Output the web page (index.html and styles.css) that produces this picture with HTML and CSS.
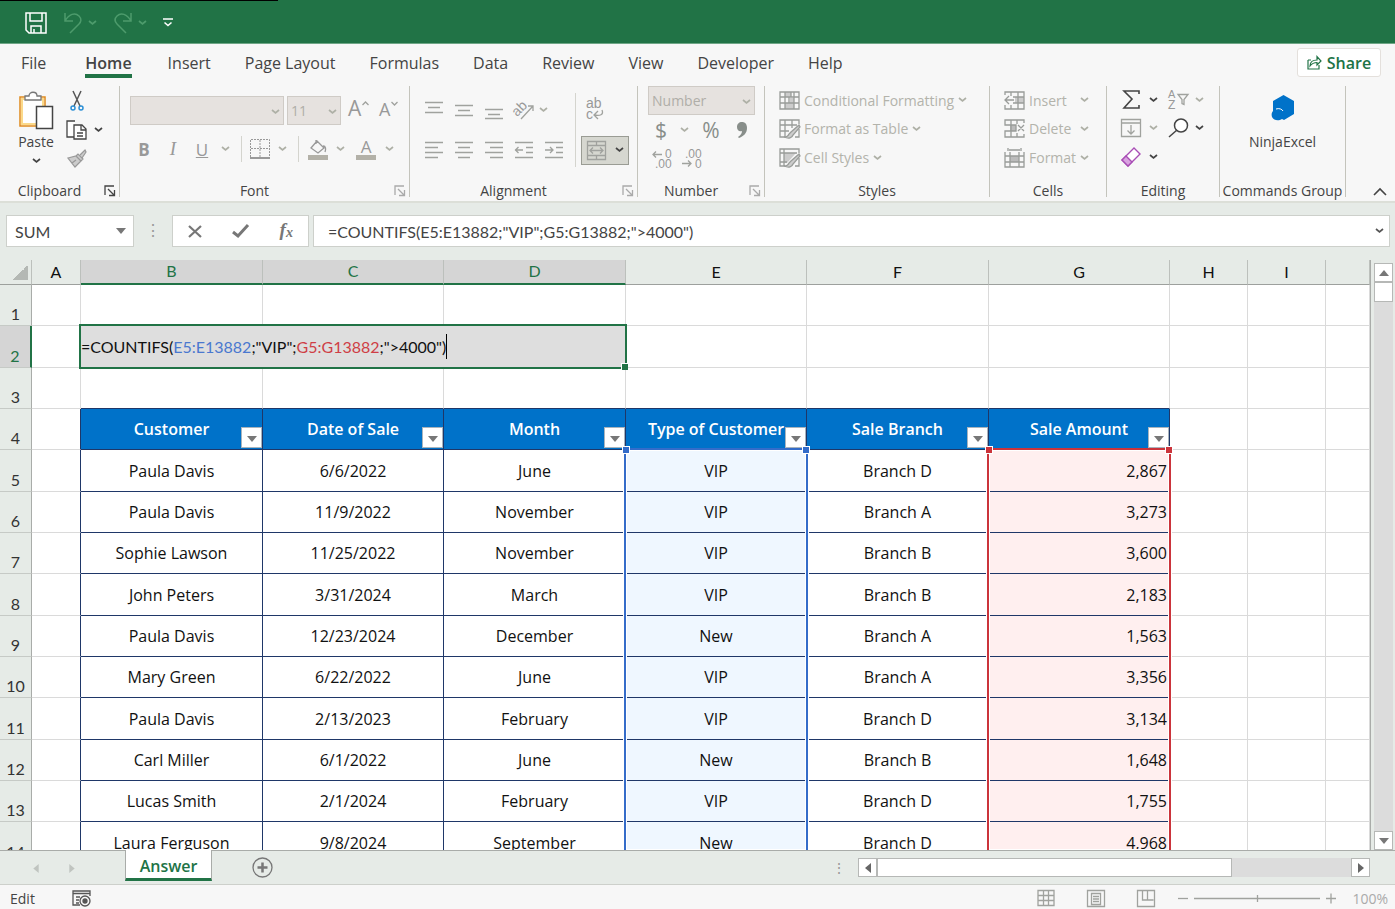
FILE: index.html
```
<!DOCTYPE html>
<html lang="en">
  <head>
    <meta charset="UTF-8" />
    <meta name="viewport" content="width=device-width, initial-scale=1.0" />
    <title>Sales - Excel</title>
    <link rel="stylesheet" href="styles.css">
  </head>
  <body>
    <!-- shared icons -->
    <svg class="sprite" aria-hidden="true">
      <symbol id="chev" viewBox="0 0 9 6"><path d="M1 1l3.5 3L8 1" fill="none" stroke="currentColor" stroke-width="1.7" /></symbol>
      <symbol id="launch" viewBox="0 0 12 12"><path d="M1 10V1h9M4 4l6 6M10.500 5v5.500H5" fill="none" stroke="currentColor" stroke-width="1.300" /></symbol>
      <symbol id="down" viewBox="0 0 10 6"><path d="M0 0h10L5 6z" fill="currentColor" /></symbol>
      <symbol id="left" viewBox="0 0 6 10"><path d="M6 0v10L0 5z" fill="currentColor" /></symbol>
      <symbol id="right" viewBox="0 0 6 10"><path d="M0 0v10l6-5z" fill="currentColor" /></symbol>
    </svg>

    <header class="titlebar">
      <button type="button" class="qat save" aria-label="Save">
        <svg width="22" height="22" viewBox="0 0 22 22" fill="none" stroke="#fff" stroke-width="1.500"><path d="M1 1h20v20H4l-3-3zM5 1v8h12V1M6 21v-7h10v7M9 21v-4" /></svg>
      </button>
      <button type="button" class="qat" aria-label="Undo">
        <svg width="20" height="22" viewBox="0 0 20 22" fill="none" stroke="#4d9b6c" stroke-width="1.500"><path d="M2 1v8h8M2 9C6 2 12 0 16 4c3 3 2 6 0 8l-9 9" /></svg>
        <svg class="chev dim-green"><use href="#chev" /></svg>
      </button>
      <button type="button" class="qat" aria-label="Redo">
        <svg width="20" height="22" viewBox="0 0 20 22" fill="none" stroke="#4d9b6c" stroke-width="1.500"><path d="M18 1v8h-8M18 9C14 2 8 0 4 4c-3 3-2 6 0 8l9 9" /></svg>
        <svg class="chev dim-green"><use href="#chev" /></svg>
      </button>
      <button type="button" class="qat" aria-label="Customize toolbar">
        <svg width="10" height="10" viewBox="0 0 10 10" fill="none" stroke="#fff" stroke-width="1.600"><path d="M0 1h10M1.500 4.500L5 7.500l3.500-3" /></svg>
      </button>
    </header>

    <nav class="tabs">
      <a href="#">File</a>
      <a href="#" class="active">Home</a>
      <a href="#">Insert</a>
      <a href="#">Page Layout</a>
      <a href="#">Formulas</a>
      <a href="#">Data</a>
      <a href="#">Review</a>
      <a href="#">View</a>
      <a href="#">Developer</a>
      <a href="#">Help</a>
      <button type="button" class="share">
        <svg width="15" height="15" viewBox="0 0 15 15" fill="none" stroke="#217346" stroke-width="1.200"><path d="M1 5v9h11v-4M3 11c0-4 3-6 7-6V1.500l4 4.500-4 4V7.500c-3 0-5 1-7 3.500zM1 5h3" /></svg>
        Share
      </button>
    </nav>

    <section class="ribbon">
      <div class="group clipboard">
        <div class="tools">
          <button type="button" class="big">
            <svg width="36" height="40" viewBox="0 0 36 40" fill="#fff"><path d="M2 6h25v29H2z" stroke="#e08a1e" stroke-width="1.500" /><path d="M4 8h21v25H4z" stroke="#fbd98a" stroke-width="2" /><path d="M7 9V5h4c0-5 8-5 8 0h4v4z" stroke="#777" stroke-width="1.300" /><path d="M18.500 15.500h16v22h-16z" stroke="#444" stroke-width="1.500" /></svg>
            <span>Paste</span>
            <svg class="chev"><use href="#chev" /></svg>
          </button>
          <div class="side">
            <button type="button" aria-label="Cut"><svg width="14" height="20" viewBox="0 0 14 20" fill="none" stroke="#555" stroke-width="1.500"><path d="M3 0l7 15M11 0L4 15" /><g stroke="#2b8fd6"><circle cx="3" cy="17" r="2" /><circle cx="11" cy="17" r="2" /></g></svg></button>
            <button type="button" class="copy" aria-label="Copy"><svg width="22" height="20" viewBox="0 0 22 20" fill="#fff" stroke="#444" stroke-width="1.300"><path d="M8 17H1V1h8" /><path d="M8 5h8l4 4v10H8zM15 5v5h5M11 13h6M11 16h6" /></svg><svg class="chev"><use href="#chev" /></svg></button>
            <button type="button" aria-label="Format Painter"><svg width="20" height="19" viewBox="0 0 20 19" fill="#ccc" stroke="#999" stroke-width="1.200"><path d="M1 9l8-2 5 5-6 6zM9 7l2-2 5 5-2 2zM13 6l5-5 1 2-4 6M5 14l4-3" /></svg></button>
          </div>
        </div>
        <div class="caption">Clipboard<svg class="launch dark"><use href="#launch" /></svg></div>
      </div>

      <div class="group font">
        <div class="tools">
          <div class="row">
            <label class="combo family"><select disabled aria-label="Font"><option></option></select><svg class="chev"><use href="#chev" /></svg></label>
            <label class="combo size"><select disabled aria-label="Font size"><option>11</option></select><svg class="chev"><use href="#chev" /></svg></label>
            <button type="button" class="grow" aria-label="Increase font size" disabled>A<svg width="7" height="5" viewBox="0 0 7 5"><path d="M.5 4l3-3 3 3" class="line" /></svg></button>
            <button type="button" class="grow shrink" aria-label="Decrease font size" disabled>A<svg width="7" height="5" viewBox="0 0 7 5"><path d="M.5 1l3 3 3-3" class="line" /></svg></button>
          </div>
          <div class="font-grid">
            <button type="button" class="bold" disabled>B</button>
            <button type="button" class="italic" disabled>I</button>
            <button type="button" class="under" disabled>U</button>
            <svg class="chev"><use href="#chev" /></svg>
            <span class="sep"></span>
            <svg width="20" height="20" viewBox="0 0 20 20" fill="none" stroke="#999"><path d="M.5 18V.5h19V18M10 1v17M1 9.500h18" stroke-dasharray="2 1" /><path d="M0 19h20" stroke-width="2" /></svg>
            <svg class="chev"><use href="#chev" /></svg>
            <span class="sep"></span>
            <svg width="20" height="21" viewBox="0 0 20 21" fill="none" stroke="#999" stroke-width="1.300"><path d="M9 2l7 7-6 5-7-5zM8 5V1M15 7c3 0 3 3 2 6" /><path d="M0 18.500h20" stroke="#b3b1a8" stroke-width="5" /></svg>
            <svg class="chev"><use href="#chev" /></svg>
            <button type="button" class="color" disabled>A</button>
            <svg class="chev"><use href="#chev" /></svg>
          </div>
        </div>
        <div class="caption">Font<svg class="launch"><use href="#launch" /></svg></div>
      </div>

      <div class="group alignment">
        <div class="align-grid">
          <svg width="18" height="18" viewBox="0 0 18 18"><path d="M0 1.500h18M3 6.500h12M0 11.500h18" class="line" /></svg>
          <svg width="18" height="18" viewBox="0 0 18 18"><path d="M0 4.500h18M3 9.500h12M0 14.500h18" class="line" /></svg>
          <svg width="18" height="18" viewBox="0 0 18 18"><path d="M0 8.500h18M3 13.500h12M0 17.500h18" class="line" /></svg>
          <svg width="22" height="22" viewBox="0 0 22 22"><text x="0" y="15" font-size="14" transform="rotate(-45 6 12)">ab</text><path d="M8 20L20 7M15 7h5v5" class="line" /></svg>
          <svg class="chev start"><use href="#chev" /></svg>
          <span class="sep tall"></span>
          <svg class="start wrap" width="20" height="22" viewBox="0 0 20 22"><text x="1" y="9" font-size="14">ab</text><text x="1" y="20" font-size="14">c</text><path d="M17 11c2 5-2 6-8 5M13 12l-4 4 4 4" class="line" /></svg>
          <svg width="18" height="18" viewBox="0 0 18 18"><path d="M0 1.500h18M0 6.500h13M0 11.500h18M0 16.500h13" class="line" /></svg>
          <svg width="18" height="18" viewBox="0 0 18 18"><path d="M0 1.500h18M3 6.500h12M0 11.500h18M3 16.500h12" class="line" /></svg>
          <svg width="18" height="18" viewBox="0 0 18 18"><path d="M0 1.500h18M5 6.500h13M0 11.500h18M5 16.500h13" class="line" /></svg>
          <svg width="18" height="18" viewBox="0 0 18 18"><path d="M0 1.500h18M11 6.500h7M11 11.500h7M0 16.500h18M0 9h8M3.500 6L.5 9l3 3" class="line" /></svg>
          <svg width="18" height="18" viewBox="0 0 18 18"><path d="M0 1.500h18M11 6.500h7M11 11.500h7M0 16.500h18M0 9h8M5 6l3 3-3 3" class="line" /></svg>
          <button type="button" class="merge" aria-label="Merge and center">
            <svg width="19" height="19" viewBox="0 0 19 19"><path d="M.5 .5h18v18H.5zM.5 4.500h18M.5 14.500h18M9.500 0v4M9.500 15v4M3 9.500h13M6 6.500l-3 3 3 3M13 6.500l3 3-3 3" class="line" /></svg>
            <svg class="chev"><use href="#chev" /></svg>
          </button>
        </div>
        <div class="caption">Alignment<svg class="launch"><use href="#launch" /></svg></div>
      </div>

      <div class="group number">
        <div class="tools">
          <label class="combo format"><select disabled aria-label="Number format"><option>Number</option></select><svg class="chev"><use href="#chev" /></svg></label>
          <div class="number-grid">
            <button type="button" disabled>$</button>
            <svg class="chev"><use href="#chev" /></svg>
            <button type="button" disabled>%</button>
            <svg width="10" height="16" viewBox="0 0 10 16"><path d="M1 15c3-2 4-4 4-6-3 1-5-1-5-4 0-3 2-5 5-5s5 2 5 6c0 5-3 8-8 10z" fill="#888e8a" /></svg>
          </div>
          <div class="decimal">
            <svg width="20" height="20" viewBox="0 0 20 20"><text x="13" y="9" font-size="12">0</text><text x="3" y="19" font-size="12">.00</text><path d="M10 5.500H1M4 2.500l-3 3 3 3" class="line" /></svg>
            <svg width="20" height="20" viewBox="0 0 20 20"><text x="3" y="9" font-size="12">.00</text><text x="13" y="19" font-size="12">0</text><path d="M0 14.500h9M6 11.500l3 3-3 3" class="line" /></svg>
          </div>
        </div>
        <div class="caption">Number<svg class="launch"><use href="#launch" /></svg></div>
      </div>

      <div class="group styles">
        <div class="list">
          <button type="button" disabled><svg width="21" height="19" viewBox="0 0 21 19"><path d="M6 1h6v5H6zM6 12h9v6H6zM11 7h4v5h-4z" fill="#ccc" /><path d="M1 1h19v17H1zM6 1v17M12 1v5M15 1v17M1 6h19M1 12h19M10 6v6" class="grid" /></svg>Conditional Formatting<svg class="chev"><use href="#chev" /></svg></button>
          <button type="button" disabled><svg width="21" height="19" viewBox="0 0 21 19"><path d="M20 5V1H1v17h5M6 1v17M13 1v8M1 6h17M1 12h9M20 10v8h-4" class="grid" /><path d="M20 6l-8 7-2 2c-1 3-3 3-5 3 5 2 8 1 9-2l7-8z" class="brush" /></svg>Format as Table<svg class="chev"><use href="#chev" /></svg></button>
          <button type="button" disabled><svg width="21" height="19" viewBox="0 0 21 19"><path d="M5 5h12L8 15H5z" fill="#ccc" /><path d="M20 5V1H1v17h5M5 1v17M1 5h17M20 10v8h-4M1 14h7" class="grid" /><path d="M20 6l-8 7-2 2c-1 3-3 3-5 3 5 2 8 1 9-2l7-8z" class="brush" /></svg>Cell Styles<svg class="chev"><use href="#chev" /></svg></button>
        </div>
        <div class="caption">Styles</div>
      </div>

      <div class="group cells">
        <div class="list">
          <button type="button" disabled><svg width="21" height="19" viewBox="0 0 21 19"><path d="M11 6h9v6h-9z" fill="#ccc" /><path d="M1 4V1h19v17H1v-4M7 1v4M14 1v17M7 14v4M9 6h11M9 12h11M1 9h9M5 5L1 9l4 4" class="grid" /></svg><span>Insert</span><svg class="chev"><use href="#chev" /></svg></button>
          <button type="button" disabled><svg width="21" height="19" viewBox="0 0 21 19"><path d="M6 6h6v6H6z" fill="#bbb" /><path d="M20 4V1H1v5h11v6H1v6h19v-3M7 1v17M13 1v4M13 14v4M14 6l6 6M20 6l-6 6" class="grid" /></svg><span>Delete</span><svg class="chev"><use href="#chev" /></svg></button>
          <button type="button" disabled><svg width="21" height="20" viewBox="0 0 21 20"><path d="M6 8h9v6H6z" fill="#bbb" /><path d="M1 4v15h19V4M1 8h19M1 14h19M6 4v15M15 4v15M4 0v3M17 0v3M5 2h11" class="grid" /></svg><span>Format</span><svg class="chev"><use href="#chev" /></svg></button>
        </div>
        <div class="caption">Cells</div>
      </div>

      <div class="group editing">
        <div class="edit-grid">
          <svg width="17" height="19" viewBox="0 0 17 19"><path d="M16 4V1H1l8 8-8 9h15v-3" fill="none" stroke="#444" stroke-width="1.600" /></svg>
          <svg class="chev dark"><use href="#chev" /></svg>
          <svg width="21" height="21" viewBox="0 0 21 21"><text x="0" y="9" font-size="11">A</text><text x="0" y="20" font-size="12">Z</text><path d="M10 5.500h10l-4 5v5l-2-1v-4z" class="line" /></svg>
          <svg class="chev"><use href="#chev" /></svg>
          <svg width="20" height="18" viewBox="0 0 20 18"><path d="M.5 .5h19v17H.5zM.5 4h19M10 6v9M6.500 11.500L10 15l3.500-3.500" class="line" /></svg>
          <svg class="chev"><use href="#chev" /></svg>
          <svg width="21" height="20" viewBox="0 0 21 20" fill="#fff" stroke="#444" stroke-width="1.500"><circle cx="13" cy="7.500" r="6.500" /><path d="M9 12l-8 7" /></svg>
          <svg class="chev dark"><use href="#chev" /></svg>
          <svg width="20" height="20" viewBox="0 0 20 20" fill="#fff" stroke="#a84db5" stroke-width="1.400"><path d="M1 13L13 1l6 6L7 19z" /><path d="M1 13l4-4 6 6-4 4z" fill="#d9a3e0" /></svg>
          <svg class="chev dark"><use href="#chev" /></svg>
        </div>
        <div class="caption">Editing</div>
      </div>

      <div class="group ninja">
        <button type="button" class="big">
          <svg width="24" height="26" viewBox="0 0 24 26"><path d="M12.500 0L23 6v13l-10 6-2-1c-3 2-8 2-10-2-1-3 0-5 1-6V6z" fill="#0072c9" /><path d="M5 14c3-1 6 0 7 2" fill="none" stroke="#fff" /></svg>
          <span>NinjaExcel</span>
        </button>
        <div class="caption">Commands Group</div>
      </div>

      <button type="button" class="collapse" aria-label="Collapse ribbon"><svg width="14" height="8" viewBox="0 0 14 8" fill="none" stroke="#444" stroke-width="1.600"><path d="M1 7l6-6 6 6" /></svg></button>
    </section>

    <section class="formula-bar">
      <div class="name-box"><input type="text" value="SUM" aria-label="Name box"><svg class="arrow"><use href="#down" /></svg></div>
      <span class="dots">⋮</span>
      <div class="formula-buttons">
        <button type="button" aria-label="Cancel"><svg width="14" height="13" viewBox="0 0 14 13" fill="none" stroke="#777" stroke-width="2.200"><path d="M1 1l12 11M13 1L1 12" /></svg></button>
        <button type="button" aria-label="Enter"><svg width="17" height="14" viewBox="0 0 17 14" fill="none" stroke="#777" stroke-width="3"><path d="M1 8l5 4L16 1" /></svg></button>
        <button type="button" class="fx" aria-label="Insert function">f<sub>x</sub></button>
      </div>
      <div class="formula"><input type="text" value='=COUNTIFS(E5:E13882;"VIP";G5:G13882;"&gt;4000")' aria-label="Formula"><svg class="chev"><use href="#chev" /></svg></div>
    </section>

    <main class="workspace">
      <div class="sheet">
        <table>
          <colgroup>
            <col class="c-head"><col class="c-a"><col class="c-wide"><col class="c-data"><col class="c-wide"><col class="c-data"><col class="c-wide"><col class="c-data"><col class="c-h"><col class="c-h"><col>
          </colgroup>
          <thead>
            <tr><th class="corner"></th><th>A</th><th class="on">B</th><th class="on">C</th><th class="on">D</th><th>E</th><th>F</th><th>G</th><th>H</th><th>I</th><th></th></tr>
          </thead>
          <tbody>
            <tr><th>1</th><td></td><td></td><td></td><td></td><td></td><td></td><td></td><td></td><td></td><td></td></tr>
            <tr><th class="on">2</th><td></td><td colspan="3" class="editing-cell"><div class="cursor-box"></div><span class="entry">=COUNTIFS(<span class="ref-blue">E5:E13882</span>;"VIP";<span class="ref-red">G5:G13882</span>;"&gt;4000")</span></td><td></td><td></td><td></td><td></td><td></td><td></td></tr>
            <tr class="before-table"><th>3</th><td></td><td></td><td></td><td></td><td></td><td></td><td></td><td></td><td></td><td></td></tr>
            <tr class="head"><th>4</th><td class="edge"></td>
              <td class="h">Customer<button type="button" aria-label="Filter"><svg class="arrow"><use href="#down" /></svg></button></td>
              <td class="h">Date of Sale<button type="button" aria-label="Filter"><svg class="arrow"><use href="#down" /></svg></button></td>
              <td class="h">Month<button type="button" aria-label="Filter"><svg class="arrow"><use href="#down" /></svg></button></td>
              <td class="h">Type of Customer<button type="button" aria-label="Filter"><svg class="arrow"><use href="#down" /></svg></button></td>
              <td class="h">Sale Branch<button type="button" aria-label="Filter"><svg class="arrow"><use href="#down" /></svg></button></td>
              <td class="h">Sale Amount<button type="button" aria-label="Filter"><svg class="arrow"><use href="#down" /></svg></button></td>
              <td></td><td></td><td></td></tr>
            <tr class="data"><th>5</th><td></td><td>Paula Davis</td><td>6/6/2022</td><td>June</td><td>VIP<div class="range blue"></div></td><td>Branch D</td><td>2,867<div class="range red"></div></td><td></td><td></td><td></td></tr>
            <tr class="data"><th>6</th><td></td><td>Paula Davis</td><td>11/9/2022</td><td>November</td><td>VIP</td><td>Branch A</td><td>3,273</td><td></td><td></td><td></td></tr>
            <tr class="data"><th>7</th><td></td><td>Sophie Lawson</td><td>11/25/2022</td><td>November</td><td>VIP</td><td>Branch B</td><td>3,600</td><td></td><td></td><td></td></tr>
            <tr class="data"><th>8</th><td></td><td>John Peters</td><td>3/31/2024</td><td>March</td><td>VIP</td><td>Branch B</td><td>2,183</td><td></td><td></td><td></td></tr>
            <tr class="data"><th>9</th><td></td><td>Paula Davis</td><td>12/23/2024</td><td>December</td><td>New</td><td>Branch A</td><td>1,563</td><td></td><td></td><td></td></tr>
            <tr class="data"><th>10</th><td></td><td>Mary Green</td><td>6/22/2022</td><td>June</td><td>VIP</td><td>Branch A</td><td>3,356</td><td></td><td></td><td></td></tr>
            <tr class="data"><th>11</th><td></td><td>Paula Davis</td><td>2/13/2023</td><td>February</td><td>VIP</td><td>Branch D</td><td>3,134</td><td></td><td></td><td></td></tr>
            <tr class="data"><th>12</th><td></td><td>Carl Miller</td><td>6/1/2022</td><td>June</td><td>New</td><td>Branch B</td><td>1,648</td><td></td><td></td><td></td></tr>
            <tr class="data"><th>13</th><td></td><td>Lucas Smith</td><td>2/1/2024</td><td>February</td><td>VIP</td><td>Branch D</td><td>1,755</td><td></td><td></td><td></td></tr>
            <tr class="data"><th>14</th><td></td><td>Laura Ferguson</td><td>9/8/2024</td><td>September</td><td>New</td><td>Branch D</td><td>4,968</td><td></td><td></td><td></td></tr>
          </tbody>
        </table>
      </div>
      <div class="vscroll">
        <button type="button" class="up" aria-label="Scroll up"><svg class="arrow"><use href="#down" /></svg></button>
        <div class="thumb"></div>
        <button type="button" class="bottom" aria-label="Scroll down"><svg class="arrow"><use href="#down" /></svg></button>
      </div>
    </main>

    <section class="sheet-bar">
      <button type="button" class="step" aria-label="Previous sheet"><svg width="6" height="9"><use href="#left" /></svg></button>
      <button type="button" class="step" aria-label="Next sheet"><svg width="6" height="9"><use href="#right" /></svg></button>
      <a href="#" class="sheet-tab">Answer</a>
      <button type="button" class="add" aria-label="New sheet"><svg width="21" height="21" viewBox="0 0 21 21" fill="none" stroke="#777"><circle cx="10.500" cy="10.500" r="9.500" stroke-width="1.300" /><path d="M10.500 5.500v10M5.500 10.500h10" stroke-width="2.500" /></svg></button>
      <span class="dots">⋮</span>
      <div class="hscroll">
        <button type="button" aria-label="Scroll left"><svg width="6" height="10"><use href="#left" /></svg></button>
        <div class="thumb"></div>
        <button type="button" aria-label="Scroll right"><svg width="6" height="10"><use href="#right" /></svg></button>
      </div>
    </section>

    <footer class="status">
      <span>Edit</span>
      <svg class="macro" width="19" height="17" viewBox="0 0 19 17" fill="none" stroke="#555" stroke-width="1.300"><path d="M8 15H1V1h17v5M1 3.500h17M4 7h4M4 10h3M4 13h3" /><circle cx="13" cy="11" r="5" /><circle cx="13" cy="11" r="2" fill="#555" /></svg>
      <svg class="view" width="18" height="17" viewBox="0 0 18 17"><path d="M1 .5h16v15H1zM1 5.500h16M1 10.500h16M6.500 1v15M11.500 1v15" class="line" /></svg>
      <svg class="view" width="18" height="17" viewBox="0 0 18 17"><path d="M.5 .5h17v16H.5zM4.500 3.500h9v11h-9zM6 6.500h6M6 9h6M6 11.500h6" class="line" /></svg>
      <svg class="view" width="18" height="17" viewBox="0 0 18 17"><path d="M.5 .5h17v16H.5zM5.500 1v9h5V1M10.500 10h6" class="line" /></svg>
      <div class="zoom">
        <svg width="12" height="12" viewBox="0 0 12 12"><path d="M1 6.500h10" class="line" /></svg>
        <svg width="126" height="12" viewBox="0 0 126 12"><path d="M0 6.500h126M63.500 3v7" class="line" /></svg>
        <svg width="12" height="12" viewBox="0 0 12 12"><path d="M1 6.500h10M6 1.500v10" class="line" /></svg>
      </div>
      <span class="percent">100%</span>
    </footer>
  </body>
</html>
```
FILE: styles.css
```
* {
  margin: 0;
  padding: 0;
  box-sizing: border-box;
}

body {
  height: 100vh;
  display: flex;
  flex-direction: column;
  overflow: hidden;
  background-color: #e6ebe7;
  font-family: "Open Sans", sans-serif;
  font-size: 14px;
  color: #444;
}

button,
input,
select {
  font: inherit;
  color: inherit;
  background: none;
  border: none;
}

a {
  color: inherit;
  text-decoration: none;
}

svg {
  flex-shrink: 0;
  overflow: visible;
}

svg text {
  font-family: "Liberation Sans", sans-serif;
  fill: #999;
}

.sprite {
  position: absolute;
  width: 0;
  height: 0;
}

.line {
  fill: none;
  stroke: #a0a29e;
  stroke-width: 1.3;
}

.grid {
  fill: none;
  stroke: #999c99;
  stroke-width: 1.3;
}

.brush {
  fill: #ccc;
  stroke: #999c99;
  stroke-width: 1.3;
}

.chev {
  width: 9px;
  height: 6px;
  color: #aeb0a6;
}

.dark {
  color: #444;
}

.arrow {
  display: block;
  width: 10px;
  height: 6px;
  color: #777;
}

/* title bar */
.titlebar {
  height: 44px;
  padding: 2px 25px 0;
  display: flex;
  align-items: center;
  gap: 16px;
  background-color: #217346;
  border-bottom: 1px solid #6fa686;
  background-image: linear-gradient(#000, #000);
  background-size: 278px 1px;
  background-repeat: no-repeat;
}

.qat {
  display: flex;
  align-items: center;
  gap: 5px;
}

.dim-green {
  color: #4d9b6c;
}

/* ribbon tabs */
.tabs {
  height: 42px;
  padding: 4px 14px 0 21px;
  display: flex;
  align-items: flex-start;
  gap: 34px;
  background-color: #f7f7f7;
  font-size: 16px;
  line-height: 30px;
  white-space: nowrap;
}

.tabs a {
  height: 30px;
}

.tabs .active {
  margin: 0 2px 0 5px;
  font-weight: 600;
  border-bottom: 4px solid #217346;
}

.share {
  height: 29px;
  width: 84px;
  margin-left: auto;
  display: flex;
  align-items: center;
  justify-content: center;
  gap: 5px;
  background-color: #fff;
  border: 1px solid #e4e0dc;
  border-radius: 3px;
  color: #217346;
  font-weight: 600;
}

/* ribbon */
.ribbon {
  height: 117px;
  display: flex;
  background-color: #f7f7f7;
  border-bottom: 2px solid #dcdfd8;
}

.group {
  height: 111px;
  display: flex;
  flex-direction: column;
  border-right: 1px solid #c4c4bc;
}

.caption {
  position: relative;
  margin-top: auto;
  height: 14px;
  line-height: 16px;
  text-align: center;
  white-space: nowrap;
}

.launch {
  position: absolute;
  right: 3px;
  bottom: 0;
  width: 12px;
  height: 12px;
  color: #aaa;
}

.launch.dark {
  color: #444;
}

.sep {
  width: 1px;
  height: 26px;
  background-color: #d4d4ce;
}

.clipboard {
  width: 120px;
}

.clipboard .caption,
.font .caption,
.alignment .caption,
.number .caption {
  padding-right: 20px;
}

.clipboard .tools {
  display: flex;
  padding: 5px 0 0 18px;
}

.big {
  display: flex;
  flex-direction: column;
  align-items: center;
}

.clipboard .big span {
  line-height: 22px;
}

.clipboard .big .chev,
.copy .chev,
.merge .chev {
  color: #444;
}

.clipboard .big .chev {
  margin-top: 5px;
}

.side {
  display: flex;
  flex-direction: column;
  align-items: flex-start;
  gap: 9px;
  margin-left: 12px;
}

.side button {
  min-width: 22px;
  height: 20px;
}

.copy {
  display: flex;
  align-items: center;
  gap: 6px;
}

.font {
  width: 290px;
}

.font .tools {
  padding: 10px 0 0 10px;
}

.row {
  display: flex;
  gap: 3px;
}

.combo {
  position: relative;
  display: block;
  height: 29px;
}

.combo select {
  width: 100%;
  height: 100%;
  padding-left: 3px;
  appearance: none;
  background-color: #e6e2df;
  border: 1px solid #cfcbc6;
  color: #b0aea8;
  opacity: 1;
}

.combo .chev {
  position: absolute;
  right: 4px;
  top: 13px;
}

.family {
  width: 154px;
}

.size {
  width: 54px;
}

.grow {
  display: flex;
  width: 28px;
  gap: 1px;
  padding-left: 4px;
  line-height: 24px;
  font-size: 21px;
  color: #999;
}

.grow svg {
  margin-top: 5px;
}

.shrink {
  line-height: 26px;
  font-size: 18px;
}

.font-grid {
  height: 48px;
  display: grid;
  grid-template-columns: 28px 30px 28px 18px 14px 24px 20px 12px 28px 16px 36px 10px;
  place-items: center;
  font-size: 17px;
  color: #999;
}

.bold {
  font-weight: 700;
}

.italic {
  font-family: "Liberation Serif", serif;
  font-style: italic;
  font-size: 19px;
}

.under {
  text-decoration: underline;
}

.color {
  width: 20px;
  line-height: 17px;
  border-bottom: 5px solid #b3b1a8;
}

.alignment {
  width: 228px;
}

.align-grid {
  display: grid;
  grid-template-columns: 30px 30px 30px 30px 30px 12px 50px;
  grid-template-rows: 40px 40px;
  place-items: center;
  padding: 4px 0 0 9px;
}

.tall {
  height: 74px;
  grid-row: span 2;
}

.start,
.merge {
  justify-self: start;
}

.wrap {
  margin-left: 4px;
}

.merge {
  width: 48px;
  height: 29px;
  display: flex;
  align-items: center;
  justify-content: center;
  gap: 9px;
  background-color: #d6d7d0;
  border: 1px solid #9a9c94;
}

.number {
  width: 127px;
}

.format {
  width: 107px;
  margin-left: 10px;
}

.number-grid {
  height: 30px;
  display: grid;
  grid-template-columns: 26px 20px 34px 28px;
  place-items: center;
  margin-left: 10px;
  font-size: 21px;
  line-height: 26px;
  color: #888e8a;
}

.decimal {
  display: flex;
  gap: 10px;
  padding: 4px 0 0 14px;
}

.styles {
  width: 225px;
}

.list {
  padding-left: 14px;
}

.list button {
  height: 28px;
  display: flex;
  align-items: center;
  gap: 4px;
  color: #b3b3ab;
  white-space: nowrap;
}

.list button + button {
  height: 29px;
}

.cells {
  width: 117px;
}

.cells .list span {
  min-width: 47px;
  text-align: left;
}

.editing {
  width: 113px;
}

.edit-grid {
  display: grid;
  grid-template-columns: 26px 18px 32px 10px;
  grid-template-rows: 27px 29px 29px;
  place-items: center;
  padding-left: 11px;
}

.ninja {
  width: 126px;
}

.ninja .big {
  padding-top: 9px;
  gap: 11px;
}

.collapse {
  margin: auto 8px 1px auto;
}

/* formula bar */
.formula-bar {
  height: 57px;
  padding: 12px 5px 13px 6px;
  display: flex;
  font-family: "Lato", sans-serif;
  font-size: 16px;
}

.name-box,
.formula-buttons,
.formula {
  display: flex;
  align-items: center;
  background-color: #fff;
  border: 1px solid #cdd0cb;
}

.name-box {
  width: 128px;
  padding: 0 7px 0 8px;
}

.name-box input {
  flex: 1;
  min-width: 0;
}

.dots {
  width: 38px;
  text-align: center;
  line-height: 30px;
  color: #999;
}

.formula-buttons {
  width: 137px;
  justify-content: space-around;
}

.fx {
  font: italic 700 19px/24px "Liberation Serif", serif;
  color: #777;
}

.fx sub {
  font-size: 14px;
  vertical-align: -1px;
}

.formula {
  flex: 1;
  margin-left: 4px;
  padding: 0 5px 0 14px;
}

.formula input {
  flex: 1;
}

.formula .chev {
  color: #555;
}

/* sheet */
.workspace {
  flex: 1;
  min-height: 0;
  display: flex;
}

.sheet {
  flex: 1;
  overflow: hidden;
  border-right: 1px solid #a9aca9;
}

table {
  width: 100%;
  height: 604px;
  table-layout: fixed;
  border-collapse: separate;
  border-spacing: 0;
  font-size: 16px;
  color: #111;
}

.c-head {
  width: 32px;
}

.c-a {
  width: 49px;
}

.c-wide {
  width: 182px;
}

.c-data {
  width: 181px;
}

.c-h {
  width: 78px;
}

th {
  font-family: "Lato", sans-serif;
  font-weight: 400;
}

thead th {
  height: 25px;
  padding-bottom: 2px;
  border-right: 1px solid #bcc0bc;
  border-bottom: 1px solid #9da09d;
}

thead .on {
  background-color: #d5d5d5;
  color: #217346;
  border-bottom: 2px solid #217346;
}

.corner {
  background: linear-gradient(135deg, transparent 50%, #b4b8b4 50%) 12px 6px / 16px 14px no-repeat;
}

tbody th {
  vertical-align: bottom;
  line-height: 23px;
  color: #333;
  border-right: 1px solid #a9aca9;
  border-bottom: 1px solid #c6cac6;
}

tbody .on {
  background-color: #d5d5d5;
  color: #217346;
  border-right: 2px solid #217346;
}

td {
  position: relative;
  background-color: #fff;
  border-right: 1px solid #dadada;
  border-bottom: 1px solid #dadada;
  text-align: center;
  white-space: nowrap;
}

.editing-cell {
  z-index: 1;
  background-color: #dedede;
  font-family: "Lato", sans-serif;
  text-align: left;
}

.cursor-box {
  position: absolute;
  inset: -2px;
  border: 2px solid #217346;
}

.cursor-box::after {
  content: "";
  position: absolute;
  right: -3px;
  bottom: -3px;
  width: 6px;
  height: 6px;
  background-color: #217346;
  box-shadow: -1px -1px 0 #fff;
}

.entry {
  padding: 3px 0;
  border-right: 1px solid #000;
}

.ref-blue {
  color: #4a78cf;
}

.ref-red {
  color: #cf3e46;
}

.before-table td:nth-child(n + 3):nth-child(-n + 8),
.head .h,
.data td:nth-child(n + 3):nth-child(-n + 8) {
  border-bottom-color: #1f3768;
}

.head td:nth-child(n + 2):nth-child(-n + 8),
.data td:nth-child(n + 2):nth-child(-n + 8) {
  border-right-color: #1f3768;
}

.head .h {
  background-color: #0072c9;
  color: #fff;
  font-weight: 600;
}

.h button {
  position: absolute;
  right: 0;
  bottom: 1px;
  width: 21px;
  height: 21px;
  padding: 3px 0 0 5px;
  background-color: #fff;
  border: 1px solid #a9b4bd;
}

.data td:nth-child(6) {
  background-color: #eff7ff;
}

.data td:nth-child(8) {
  padding-right: 2px;
  background-color: #ffefef;
  text-align: right;
}

/* range outline covers all ten data rows */
.range {
  position: absolute;
  top: -2px;
  left: -2px;
  right: -2px;
  height: 1000%;
  z-index: 1;
  border: 2px solid;
  box-shadow: -1px 0 #fff, 1px 0 #fff, inset 0 0 0 1px #fff;
}

.range::before,
.range::after {
  content: "";
  position: absolute;
  top: -3px;
  width: 6px;
  height: 6px;
  background-color: currentColor;
  box-shadow: 0 0 0 1px #fff;
}

.range::before {
  left: -3px;
}

.range::after {
  right: -3px;
}

.blue {
  color: #346cc9;
}

.red {
  color: #cb343b;
}

/* scroll bars */
.vscroll {
  width: 19px;
  margin: 3px 2px 0 3px;
  display: flex;
  flex-direction: column;
  background-color: #dcdcdc;
}

.vscroll button,
.hscroll button,
.thumb {
  display: flex;
  align-items: center;
  justify-content: center;
  background-color: #fff;
  border: 1px solid #b6b8b6;
}

.vscroll button {
  height: 19px;
}

.vscroll .thumb {
  height: 20px;
}

.up .arrow {
  transform: rotate(180deg);
}

.vscroll .bottom {
  margin-top: auto;
}

.sheet-bar {
  height: 35px;
  padding-right: 25px;
  display: flex;
  align-items: center;
  border-top: 1px solid #a9aca9;
  border-bottom: 1px solid #cdd0cb;
}

.step {
  width: 36px;
  color: #c0c4c0;
}

.step:first-child {
  margin-left: 18px;
}

.sheet-tab {
  width: 87px;
  height: 31px;
  margin: -1px 0 auto 35px;
  background-color: #fff;
  border: 1px solid #a9aca9;
  border-top: none;
  border-bottom: 3px solid #217346;
  color: #217346;
  font-size: 16px;
  font-weight: 600;
  line-height: 32px;
  text-align: center;
}

.add {
  height: 21px;
  margin: 0 auto 0 40px;
}

.hscroll {
  width: 512px;
  height: 19px;
  display: flex;
  background-color: #dcdcdc;
}

.hscroll button {
  width: 19px;
  color: #666;
}

.hscroll .thumb {
  width: 355px;
}

.hscroll button:last-child {
  margin-left: auto;
}

.status {
  height: 24px;
  padding: 2px 7px 0 10px;
  display: flex;
  align-items: center;
  background-color: #f7f7f7;
}

.macro {
  margin: 0 auto 0 37px;
}

.view {
  margin-right: 32px;
}

.zoom {
  display: flex;
  gap: 5px;
  margin: 0 15px 0 -10px;
}

.percent {
  color: #aaa;
}
```
